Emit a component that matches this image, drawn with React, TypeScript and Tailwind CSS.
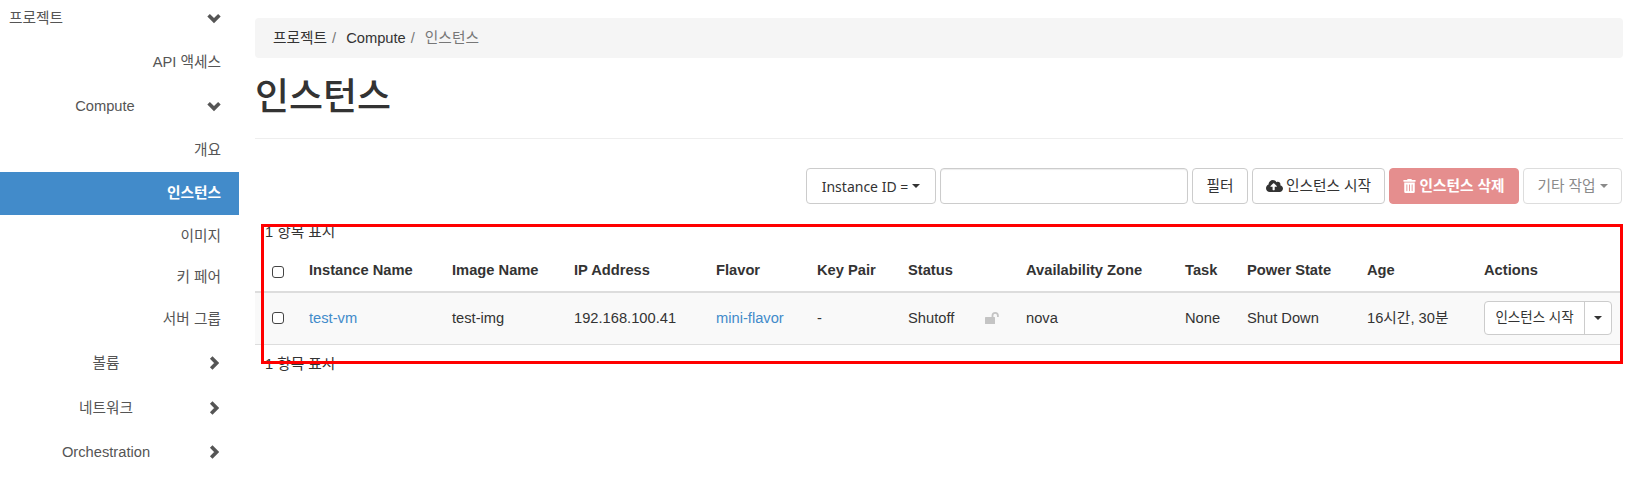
import { FaCloudUploadAlt, FaTrashAlt } from "react-icons/fa";

const sans = "font-['Liberation_Sans','Noto_Sans_CJK_KR',sans-serif]";
const btn = "inline-flex h-[36px] items-center justify-center rounded-[4px] border";
const plain = "border-[#ccc] bg-white text-[#333]";

function Caret({ className = "border-t-[#333]" }: { className?: string }) {
  return <span className={`inline-block h-0 w-0 border-x-[4px] border-t-[4px] border-x-transparent ${className}`} />;
}

function ChevronDown() {
  return (
    <svg width="14" height="11" viewBox="0 0 14 11" className="shrink-0">
      <polyline points="1.6,2.2 7,7.6 12.4,2.2" fill="none" stroke="#555" strokeWidth="3.6" />
    </svg>
  );
}

function ChevronRight() {
  return (
    <svg width="10" height="14" viewBox="0 0 10 14" className="mr-[2px] shrink-0">
      <polyline points="2.2,1.6 7.6,7 2.2,12.4" fill="none" stroke="#555" strokeWidth="3.6" />
    </svg>
  );
}

function UnlockIcon() {
  return (
    <svg width="15" height="12" viewBox="0 0 15 12" className="block">
      <rect x="0" y="5" width="10" height="7" rx="0.5" fill="#c4c4c4" />
      <path d="M7.5 5.5V3.6a2.7 2.7 0 0 1 5.4 0V5" fill="none" stroke="#c4c4c4" strokeWidth="1.8" />
    </svg>
  );
}

function NavRow({ label, open, className }: { label: string; open: boolean; className: string }) {
  return (
    <div className={`flex items-center pl-[3px] pr-[18px] text-[#555] ${className}`}>
      <span className="flex-1 text-center">{label}</span>
      {open ? <ChevronDown /> : <ChevronRight />}
    </div>
  );
}

function NavLink({ label, className, active }: { label: string; className: string; active?: boolean }) {
  return (
    <div className={`flex items-center justify-end pr-[18px] ${className} ${active ? "bg-[#428bca] font-bold text-white" : "text-[#555]"}`}>
      {label}
    </div>
  );
}

function Sidebar() {
  return (
    <aside className="w-[239px] shrink-0">
      <div className="mb-[4px] flex h-[36px] items-center justify-between pl-[9px] pr-[18px] text-[#555]">
        <span>프로젝트</span>
        <ChevronDown />
      </div>
      <NavLink label="API 액세스" className="h-[44px]" />
      <NavRow label="Compute" open className="h-[44px]" />
      <NavLink label="개요" className="h-[44px]" />
      <NavLink label="인스턴스" active className="h-[43px]" />
      <NavLink label="이미지" className="h-[42px]" />
      <NavLink label="키 페어" className="h-[41px]" />
      <NavLink label="서버 그룹" className="h-[42px]" />
      <NavRow label="볼륨" open={false} className="h-[46px]" />
      <NavRow label="네트워크" open={false} className="h-[44px]" />
      <NavRow label="Orchestration" open={false} className="h-[44px]" />
    </aside>
  );
}

function Toolbar() {
  return (
    <div className="mt-[29px] flex justify-end gap-[4px] pr-[1px]">
      <button className={`${btn} ${plain} w-[130px] gap-[4px] font-['Noto_Sans','Noto_Sans_CJK_KR',sans-serif] text-[14px]`}>
        Instance ID = <Caret />
      </button>
      <input className="h-[36px] w-[248px] rounded-[4px] border border-[#ccc] bg-white shadow-[inset_0_1px_1px_rgba(0,0,0,0.075)]" />
      <button className={`${btn} ${plain} w-[56px]`}>필터</button>
      <button className={`${btn} ${plain} w-[133px] gap-[3px]`}>
        <FaCloudUploadAlt className="h-[16px] w-[17px] text-[#333]" /> 인스턴스 시작
      </button>
      <button className={`${btn} w-[130px] gap-[3px] border-[#e58e8e] bg-[#e58e8e] font-bold text-white`}>
        <FaTrashAlt className="h-[14px] w-[13px]" /> 인스턴스 삭제
      </button>
      <button className={`${btn} w-[99px] gap-[4px] border-[#ddd] bg-white text-[#8a8a8a]`}>
        기타 작업 <Caret className="border-t-[#8a8a8a]" />
      </button>
    </div>
  );
}

function Checkbox() {
  return <span className="block h-[12px] w-[12px] rounded-[3px] border border-[#444] bg-white" />;
}

const headers = ["Instance Name", "Image Name", "IP Address", "Flavor", "Key Pair"];
const link = "text-[#428bca]";
const th = "px-[8px] pb-[10px] align-bottom font-bold";

function InstanceTable() {
  return (
    <table className="w-full table-fixed border-collapse text-[#333]">
      <colgroup>
        <col className="w-[46px]" />
        <col className="w-[143px]" />
        <col className="w-[122px]" />
        <col className="w-[142px]" />
        <col className="w-[101px]" />
        <col className="w-[91px]" />
        <col className="w-[77px]" />
        <col className="w-[41px]" />
        <col className="w-[159px]" />
        <col className="w-[62px]" />
        <col className="w-[120px]" />
        <col className="w-[117px]" />
        <col />
      </colgroup>
      <thead>
        <tr className="h-[50px] border-b-2 border-[#ddd] text-left">
          <th className="pb-[13px] pl-[17px] align-bottom"><Checkbox /></th>
          {headers.map((h) => (
            <th key={h} className={th}>{h}</th>
          ))}
          <th className={th} colSpan={2}>Status</th>
          <th className={th}>Availability Zone</th>
          <th className={th}>Task</th>
          <th className={th}>Power State</th>
          <th className={th}>Age</th>
          <th className={th}>Actions</th>
        </tr>
      </thead>
      <tbody>
        <tr className="h-[52px] border-b border-[#ddd] bg-[#f9f9f9]">
          <td className="pl-[17px]"><Checkbox /></td>
          <td className={`px-[8px] ${link}`}>test-vm</td>
          <td className="px-[8px]">test-img</td>
          <td className="px-[8px]">192.168.100.41</td>
          <td className={`px-[8px] ${link}`}>mini-flavor</td>
          <td className="px-[8px]">-</td>
          <td className="px-[8px]">Shutoff</td>
          <td className="px-[8px]"><UnlockIcon /></td>
          <td className="px-[8px]">nova</td>
          <td className="px-[8px]">None</td>
          <td className="px-[8px]">Shut Down</td>
          <td className="px-[8px]">16시간, 30분</td>
          <td className="px-[8px]">
            <div className="flex h-[34px] w-[128px] rounded-[4px] border border-[#ccc] bg-white">
              <span className="flex w-[100px] items-center justify-center border-r border-[#ccc] text-[13.5px]">인스턴스 시작</span>
              <span className="flex flex-1 items-center justify-center"><Caret /></span>
            </div>
          </td>
        </tr>
      </tbody>
    </table>
  );
}

export default function App() {
  return (
    <div className={`relative flex h-[477px] w-[1628px] overflow-hidden bg-white text-[14.7px] ${sans}`}>
      <Sidebar />
      <main className="ml-[16px] w-[1368px] pt-[18px]">
        <nav className="flex h-[40px] items-center rounded-[4px] bg-[#f5f5f5] pl-[18px] text-[#333]">
          <span>프로젝트</span>
          <span className="pl-[5px] pr-[10px] text-[#777]">/</span>
          <span>Compute</span>
          <span className="pl-[5px] pr-[10px] text-[#777]">/</span>
          <span className="text-[#777]">인스턴스</span>
        </nav>
        <h1 className="mt-[20px] text-[37px] font-medium leading-[40px] text-[#333]">인스턴스</h1>
        <div className="mt-[20px] h-px bg-[#eee]" />
        <Toolbar />
        <div className="mt-[18px] pl-[10px] leading-[20px] text-[#333]">1 항목 표시</div>
        <InstanceTable />
        <div className="mt-[9px] pl-[10px] leading-[20px] text-[#333]">1 항목 표시</div>
      </main>
      {/* red annotation box over the table */}
      <div className="absolute left-[261px] top-[224px] h-[140px] w-[1362px] border-[3px] border-[#ff0000]" />
    </div>
  );
}
